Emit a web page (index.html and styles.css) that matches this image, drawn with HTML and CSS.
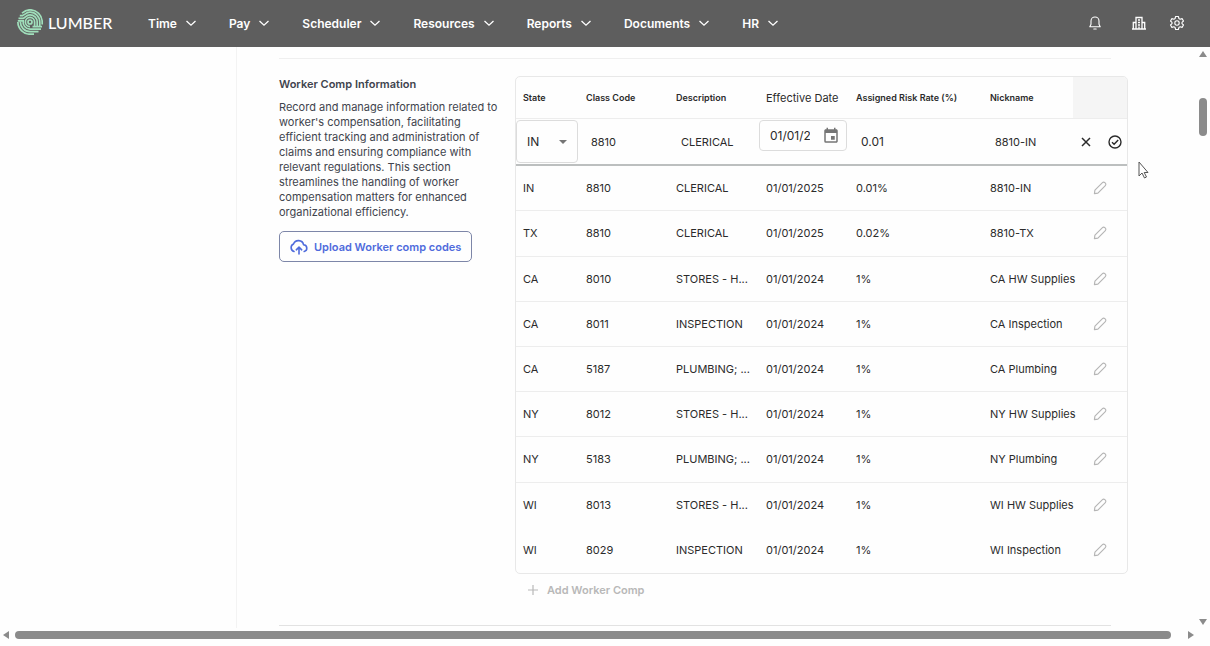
FILE: index.html
```html
<!DOCTYPE html>
<html lang="en">
  <head>
    <meta charset="UTF-8" />
    <meta name="viewport" content="width=device-width, initial-scale=1.0" />
    <title>Lumber - Worker Comp Information</title>
    <link rel="stylesheet" href="styles.css">
  </head>
  <body>
    <svg class="sprite" aria-hidden="true">
      <symbol id="chevron" viewBox="0 0 12 12">
        <path d="M1.500 4l4.500 4.200L10.500 4" fill="none" stroke="currentColor" stroke-width="1.3" />
      </symbol>
      <symbol id="pencil" viewBox="0 0 16 16">
        <path d="M1.6 14.4l.6-4L10.800 1.900a1.900 1.900 0 0 1 2.700 0l.6.6a1.900 1.900 0 0 1 0 2.700L5.600 13.800z" fill="none" stroke="currentColor" stroke-width="1.300" stroke-linejoin="round" />
      </symbol>
    </svg>

    <header class="topbar">
      <a class="logo" href="#">
        <svg class="logo-mark" viewBox="0 0 26 26" fill="none" stroke="#a0dfbb" stroke-width="1.7" aria-hidden="true">
          <circle cx="13" cy="13" r="2" />
          <path d="M13 17.600A4.600 4.600 0 1 1 17.600 13V17" />
          <path d="M20.200 17V13A7.200 7.200 0 0 0 13 5.800C9.500 5.800 8.800 8 6.500 9.300H1.500" />
          <path d="M22.800 17V13A9.800 9.800 0 0 0 13 3.200C9.500 3.200 8 5.400 5.500 6.700H2.800" />
          <path d="M25.200 15.500V13A12.200 12.200 0 0 0 13 .8C9.500.8 7 2.500 5 4.200" />
          <path d="M.8 11.800H6.200A7.200 7.200 0 0 0 13 20.200H24" />
          <path d="M3.400 12.500A9.800 9.800 0 0 0 13 22.700H21.500M.9 13A12.200 12.200 0 0 0 13 25.200H17M15.500 17.700H25" />
        </svg>
        <span>LUMBER</span>
      </a>
      <nav class="menu">
        <a href="#">Time <svg><use href="#chevron" /></svg></a>
        <a href="#">Pay <svg><use href="#chevron" /></svg></a>
        <a href="#">Scheduler <svg><use href="#chevron" /></svg></a>
        <a href="#">Resources <svg><use href="#chevron" /></svg></a>
        <a href="#">Reports <svg><use href="#chevron" /></svg></a>
        <a href="#">Documents <svg><use href="#chevron" /></svg></a>
        <a href="#">HR <svg><use href="#chevron" /></svg></a>
      </nav>
      <div class="tools">
        <button type="button" aria-label="Notifications">
          <svg viewBox="0 0 16 16" fill="none" stroke="currentColor" stroke-width="1.1" stroke-linejoin="round" stroke-linecap="round">
            <path d="M8 2a4 4 0 0 0-4 4v3.200L2.800 11.800h10.400L12 9.200V6a4 4 0 0 0-4-4zM6.800 14h2.400" />
          </svg>
        </button>
        <button type="button" aria-label="Company">
          <svg viewBox="0 0 16 16" fill="none" stroke="currentColor" stroke-width="1.3">
            <path d="M1 14h14M2.300 14V7.500H5M5 14V2.500h6V14M11 7.500h2.700V14M7 5h2M7 7.500h2M7 10h2M8 11.500V14" />
          </svg>
        </button>
        <button type="button" aria-label="Settings">
          <svg viewBox="0 0 16 16" fill="none" stroke="currentColor" stroke-width="1.1" stroke-linejoin="round">
            <path d="M6.600 1.500h2.800l.5 2 1.200.7 2-.6 1.400 2.400-1.500 1.400v1.300l1.500 1.300-1.400 2.400-2-.6-1.200.7-.5 2H6.600l-.5-2-1.200-.7-2 .6L1.500 10 3 8.700V7.400L1.500 6l1.400-2.400 2 .6 1.200-.7z" />
            <circle cx="8" cy="8" r="2.200" />
          </svg>
        </button>
      </div>
    </header>

    <div class="viewport">
      <main class="page">
        <aside class="sidebar"></aside>
        <div class="content">
          <hr />
          <section class="worker-comp">
            <div class="intro">
              <h2>Worker Comp Information</h2>
              <p>
                Record and manage information related to worker's compensation,
                facilitating efficient tracking and administration of claims and
                ensuring compliance with relevant regulations. This section
                streamlines the handling of worker compensation matters for
                enhanced organizational efficiency.
              </p>
              <button type="button" class="upload">
                <svg viewBox="0 0 18 16" fill="none" stroke="currentColor" stroke-width="1.6" stroke-linecap="round" stroke-linejoin="round" aria-hidden="true">
                  <path d="M4 12.500A4 4 0 0 1 3.500 5 5.300 5.300 0 0 1 13.600 5.800a3.400 3.400 0 0 1 .6 6.700M9 15V8.500M6.300 10.800L9 8.200l2.700 2.600" />
                </svg>
                Upload Worker comp codes
              </button>
            </div>

            <div class="codes">
              <div class="table-box">
                <table>
                  <colgroup>
                    <col class="col-state" />
                    <col class="col-mid" />
                    <col class="col-mid" />
                    <col class="col-mid" />
                    <col class="col-rate" />
                    <col class="col-mid" />
                    <col class="col-actions" />
                  </colgroup>
                  <thead>
                    <tr>
                      <th>State</th>
                      <th>Class Code</th>
                      <th>Description</th>
                      <th class="date-head">Effective Date</th>
                      <th>Assigned Risk Rate (%)</th>
                      <th>Nickname</th>
                      <td class="blank"></td>
                    </tr>
                  </thead>
                  <tbody>
                    <tr class="editing">
                      <td class="flush">
                        <div class="state-field">
                          <select aria-label="State">
                            <option>IN</option>
                            <option>TX</option>
                            <option>CA</option>
                            <option>NY</option>
                            <option>WI</option>
                          </select>
                          <svg viewBox="0 0 8 4" aria-hidden="true"><path d="M0 0h8L4 4z" fill="#757575" /></svg>
                        </div>
                      </td>
                      <td><input type="text" aria-label="Class Code" value="8810" /></td>
                      <td><input type="text" aria-label="Description" value="CLERICAL" /></td>
                      <td class="flush top">
                        <div class="date-field">
                          <input type="text" aria-label="Effective Date" value="01/01/2025" />
                          <button type="button" aria-label="Choose date">
                            <svg viewBox="0 0 24 24" fill="#757575">
                              <path d="M17 12h-5v5h5v-5zM16 1v2H8V1H6v2H5c-1.100 0-2 .9-2 2v14a2 2 0 0 0 2 2h14c1.100 0 2-.9 2-2V5c0-1.100-.9-2-2-2h-1V1h-2zm3 18H5V8h14v11z" />
                            </svg>
                          </button>
                        </div>
                      </td>
                      <td><input class="rate" type="text" aria-label="Assigned Risk Rate" value="0.01" /></td>
                      <td><input type="text" aria-label="Nickname" value="8810-IN" /></td>
                      <td class="flush">
                        <div class="row-actions">
                          <button type="button" aria-label="Cancel">
                            <svg viewBox="0 0 14 14" fill="none" stroke="currentColor" stroke-width="1.500"><path d="M3 3l8 8M11 3l-8 8" /></svg>
                          </button>
                          <button type="button" aria-label="Save">
                            <svg viewBox="0 0 14 14" fill="none" stroke="currentColor" stroke-width="1.400"><circle cx="7" cy="7" r="6" /><path d="M4 7.300l2.100 2L10.200 5" /></svg>
                          </button>
                        </div>
                      </td>
                    </tr>
                    <tr><td>IN</td><td>8810</td><td>CLERICAL</td><td>01/01/2025</td><td>0.01%</td><td>8810-IN</td><td class="edit"><button type="button" aria-label="Edit"><svg><use href="#pencil" /></svg></button></td></tr>
                    <tr><td>TX</td><td>8810</td><td>CLERICAL</td><td>01/01/2025</td><td>0.02%</td><td>8810-TX</td><td class="edit"><button type="button" aria-label="Edit"><svg><use href="#pencil" /></svg></button></td></tr>
                    <tr><td>CA</td><td>8010</td><td>STORES - H...</td><td>01/01/2024</td><td>1%</td><td>CA HW Supplies</td><td class="edit"><button type="button" aria-label="Edit"><svg><use href="#pencil" /></svg></button></td></tr>
                    <tr><td>CA</td><td>8011</td><td>INSPECTION</td><td>01/01/2024</td><td>1%</td><td>CA Inspection</td><td class="edit"><button type="button" aria-label="Edit"><svg><use href="#pencil" /></svg></button></td></tr>
                    <tr><td>CA</td><td>5187</td><td>PLUMBING; ...</td><td>01/01/2024</td><td>1%</td><td>CA Plumbing</td><td class="edit"><button type="button" aria-label="Edit"><svg><use href="#pencil" /></svg></button></td></tr>
                    <tr><td>NY</td><td>8012</td><td>STORES - H...</td><td>01/01/2024</td><td>1%</td><td>NY HW Supplies</td><td class="edit"><button type="button" aria-label="Edit"><svg><use href="#pencil" /></svg></button></td></tr>
                    <tr><td>NY</td><td>5183</td><td>PLUMBING; ...</td><td>01/01/2024</td><td>1%</td><td>NY Plumbing</td><td class="edit"><button type="button" aria-label="Edit"><svg><use href="#pencil" /></svg></button></td></tr>
                    <tr><td>WI</td><td>8013</td><td>STORES - H...</td><td>01/01/2024</td><td>1%</td><td>WI HW Supplies</td><td class="edit"><button type="button" aria-label="Edit"><svg><use href="#pencil" /></svg></button></td></tr>
                    <tr><td>WI</td><td>8029</td><td>INSPECTION</td><td>01/01/2024</td><td>1%</td><td>WI Inspection</td><td class="edit"><button type="button" aria-label="Edit"><svg><use href="#pencil" /></svg></button></td></tr>
                  </tbody>
                </table>
              </div>
              <button type="button" class="add" disabled>
                <svg viewBox="0 0 10 10" stroke="currentColor" stroke-width="1.200" aria-hidden="true"><path d="M5 0v10M0 5h10" /></svg>
                Add Worker Comp
              </button>
            </div>
          </section>
          <hr class="bottom" />
        </div>
      </main>

      <div class="scroll-y" aria-hidden="true">
        <svg viewBox="0 0 8 6"><path d="M4 0l4 6H0z" /></svg>
        <div class="thumb"></div>
        <svg viewBox="0 0 8 6"><path d="M0 0h8L4 6z" /></svg>
      </div>
      <div class="scroll-x" aria-hidden="true">
        <svg viewBox="0 0 6 8"><path d="M6 0v8L0 4z" /></svg>
        <div class="thumb"></div>
        <svg viewBox="0 0 6 8"><path d="M0 0v8l6-4z" /></svg>
      </div>
    </div>

    <svg class="cursor" viewBox="0 0 11 18" aria-hidden="true">
      <path d="M1 1v14l3-3 2.500 5 2-1-2.300-4.500H10z" fill="#fff" stroke="#555" stroke-width="1" />
    </svg>
  </body>
</html>
```

FILE: styles.css
```css
* {
  box-sizing: border-box;
}

body {
  margin: 0;
  height: 100vh;
  display: flex;
  flex-direction: column;
  overflow: hidden;
  font-family: Inter, sans-serif;
  font-size: 11px;
  color: #2b2b2b;
  background-color: #fefefe;
}

button,
input,
select {
  font: inherit;
  color: inherit;
  border: none;
  padding: 0;
  background: none;
}

button {
  cursor: pointer;
}

svg {
  display: block;
  flex: none;
}

.sprite {
  position: absolute;
  width: 0;
  height: 0;
}

/* top bar */
.topbar {
  flex: none;
  display: flex;
  align-items: center;
  height: 47px;
  padding: 0 25px 1px 17px;
  background-color: #5e5e5e;
  color: #fff;
}

.topbar a {
  color: inherit;
  text-decoration: none;
}

.logo {
  display: flex;
  align-items: center;
  gap: 5px;
  width: 131px;
  padding-bottom: 2px;
  font-family: Lato, sans-serif;
  font-size: 16px;
  font-weight: 500;
}

.logo-mark {
  width: 26px;
  height: 26px;
}

.menu {
  display: flex;
  gap: 32px;
  font-size: 12px;
  font-weight: 600;
}

.menu a {
  display: flex;
  align-items: center;
  gap: 8px;
}

.menu svg {
  width: 12px;
  height: 12px;
}

.tools {
  display: flex;
  gap: 22px;
  margin-left: auto;
}

.tools svg {
  width: 16px;
  height: 16px;
}

.tools button:first-child {
  margin-right: 6px;
}

/* scrolling area */
.viewport {
  flex: 1;
  min-height: 0;
  display: grid;
  grid-template-columns: 1fr 13px;
  grid-template-rows: 1fr 18px;
}

.page {
  display: flex;
  min-height: 0;
  overflow: hidden;
}

.sidebar {
  flex: none;
  width: 237px;
  border-right: 1px solid #f3f3f3;
}

.content {
  flex: 1;
  padding: 11px 69px 0 42px;
}

hr {
  margin: 0 17px 0 0;
  border: none;
  border-top: 1px solid #efefef;
}

hr.bottom {
  margin-top: 28px;
  border-color: #e2e2e2;
}

.worker-comp {
  display: flex;
  gap: 14px;
  padding-top: 17px;
}

.intro {
  flex: none;
  width: 222px;
  color: #3f444d;
}

.intro h2 {
  margin: 0 0 8px;
  font-size: 11px;
  line-height: 16px;
  font-weight: 600;
}

.intro p {
  margin: 0 0 11px;
  line-height: 15px;
}

.upload {
  display: flex;
  align-items: center;
  gap: 6px;
  height: 31px;
  padding: 0 10px;
  border: 1px solid #7d86a8;
  border-radius: 5px;
  color: #4f6bdc;
  font-weight: 600;
}

.upload svg {
  width: 18px;
  height: 16px;
}

/* table */
.codes {
  flex: 1;
}

.table-box {
  border: 1px solid #e8e8e8;
  border-radius: 5px;
  overflow: hidden;
}

table {
  width: 100%;
  height: 496px;
  table-layout: fixed;
  border-collapse: separate;
  border-spacing: 0;
}

.col-state {
  width: 63px;
}

.col-mid {
  width: 90px;
}

.col-actions {
  width: 54px;
}

th,
td {
  height: 45px;
  padding: 0 0 0 7px;
  text-align: left;
  white-space: nowrap;
  border-bottom: 1px solid #ededed;
}

th,
.blank {
  height: 42px;
  font-size: 9px;
  font-weight: 600;
}

th.date-head {
  font-size: 11px;
  font-weight: 400;
}

.blank {
  background-color: #f5f5f5;
}

tbody tr:last-child td,
tbody tr:nth-last-child(2) td {
  border-bottom: none;
}

.editing td {
  height: 47px;
  padding-left: 12px;
  border-bottom: 2px solid #bcbfbf;
}

.editing td.flush {
  padding: 0;
}

.editing td.top {
  vertical-align: top;
}

.editing input {
  display: block;
  width: 100%;
}

.editing input.rate {
  font-size: 12px;
}

.state-field {
  display: flex;
  align-items: center;
  width: 62px;
  height: 43px;
  padding: 0 10px;
  border: 1px solid #dcdcdc;
  border-radius: 4px;
}

.state-field select {
  flex: 1;
  appearance: none;
  font-size: 12px;
}

.state-field svg {
  width: 8px;
  height: 4px;
}

.date-field {
  display: flex;
  align-items: center;
  gap: 12px;
  width: 88px;
  height: 31px;
  margin-top: 1px;
  padding: 0 6px 0 10px;
  border: 1px solid #dcdcdc;
  border-radius: 4px;
}

.date-field input {
  flex: 1;
  min-width: 0;
  font-size: 12px;
}

.date-field svg {
  width: 18px;
  height: 18px;
}

.row-actions {
  display: flex;
  justify-content: flex-end;
  gap: 15px;
  padding-right: 5px;
}

.row-actions svg {
  width: 14px;
  height: 14px;
}

.edit {
  padding: 0;
}

.edit button {
  display: block;
  margin: 0 auto;
  color: #b5b5b5;
}

.edit svg {
  width: 14px;
  height: 14px;
}

.add {
  display: flex;
  align-items: center;
  gap: 9px;
  margin-top: 9px;
  padding-left: 13px;
  color: #b8b8b8;
  font-weight: 600;
}

.add svg {
  width: 10px;
  height: 10px;
}

/* scrollbars */
.scroll-y,
.scroll-x {
  display: flex;
  justify-content: space-between;
  fill: #8b8b8b;
}

.scroll-y {
  flex-direction: column;
  align-items: flex-start;
  padding: 4px 0 3px 2px;
}

.scroll-y svg {
  width: 8px;
  height: 6px;
}

.scroll-x svg {
  width: 6px;
  height: 8px;
}

.scroll-x {
  align-items: center;
  gap: 6px;
  padding: 0 3px 4px;
}

.thumb {
  border-radius: 4px;
  background-color: #8b8b8b;
}

.scroll-y .thumb {
  width: 8px;
  height: 38px;
  margin: 41px 0 auto;
}

.scroll-x .thumb {
  flex: 1;
  height: 8px;
  margin-right: 11px;
}

.cursor {
  position: absolute;
  left: 1138px;
  top: 161px;
  width: 11px;
  height: 18px;
}
```
